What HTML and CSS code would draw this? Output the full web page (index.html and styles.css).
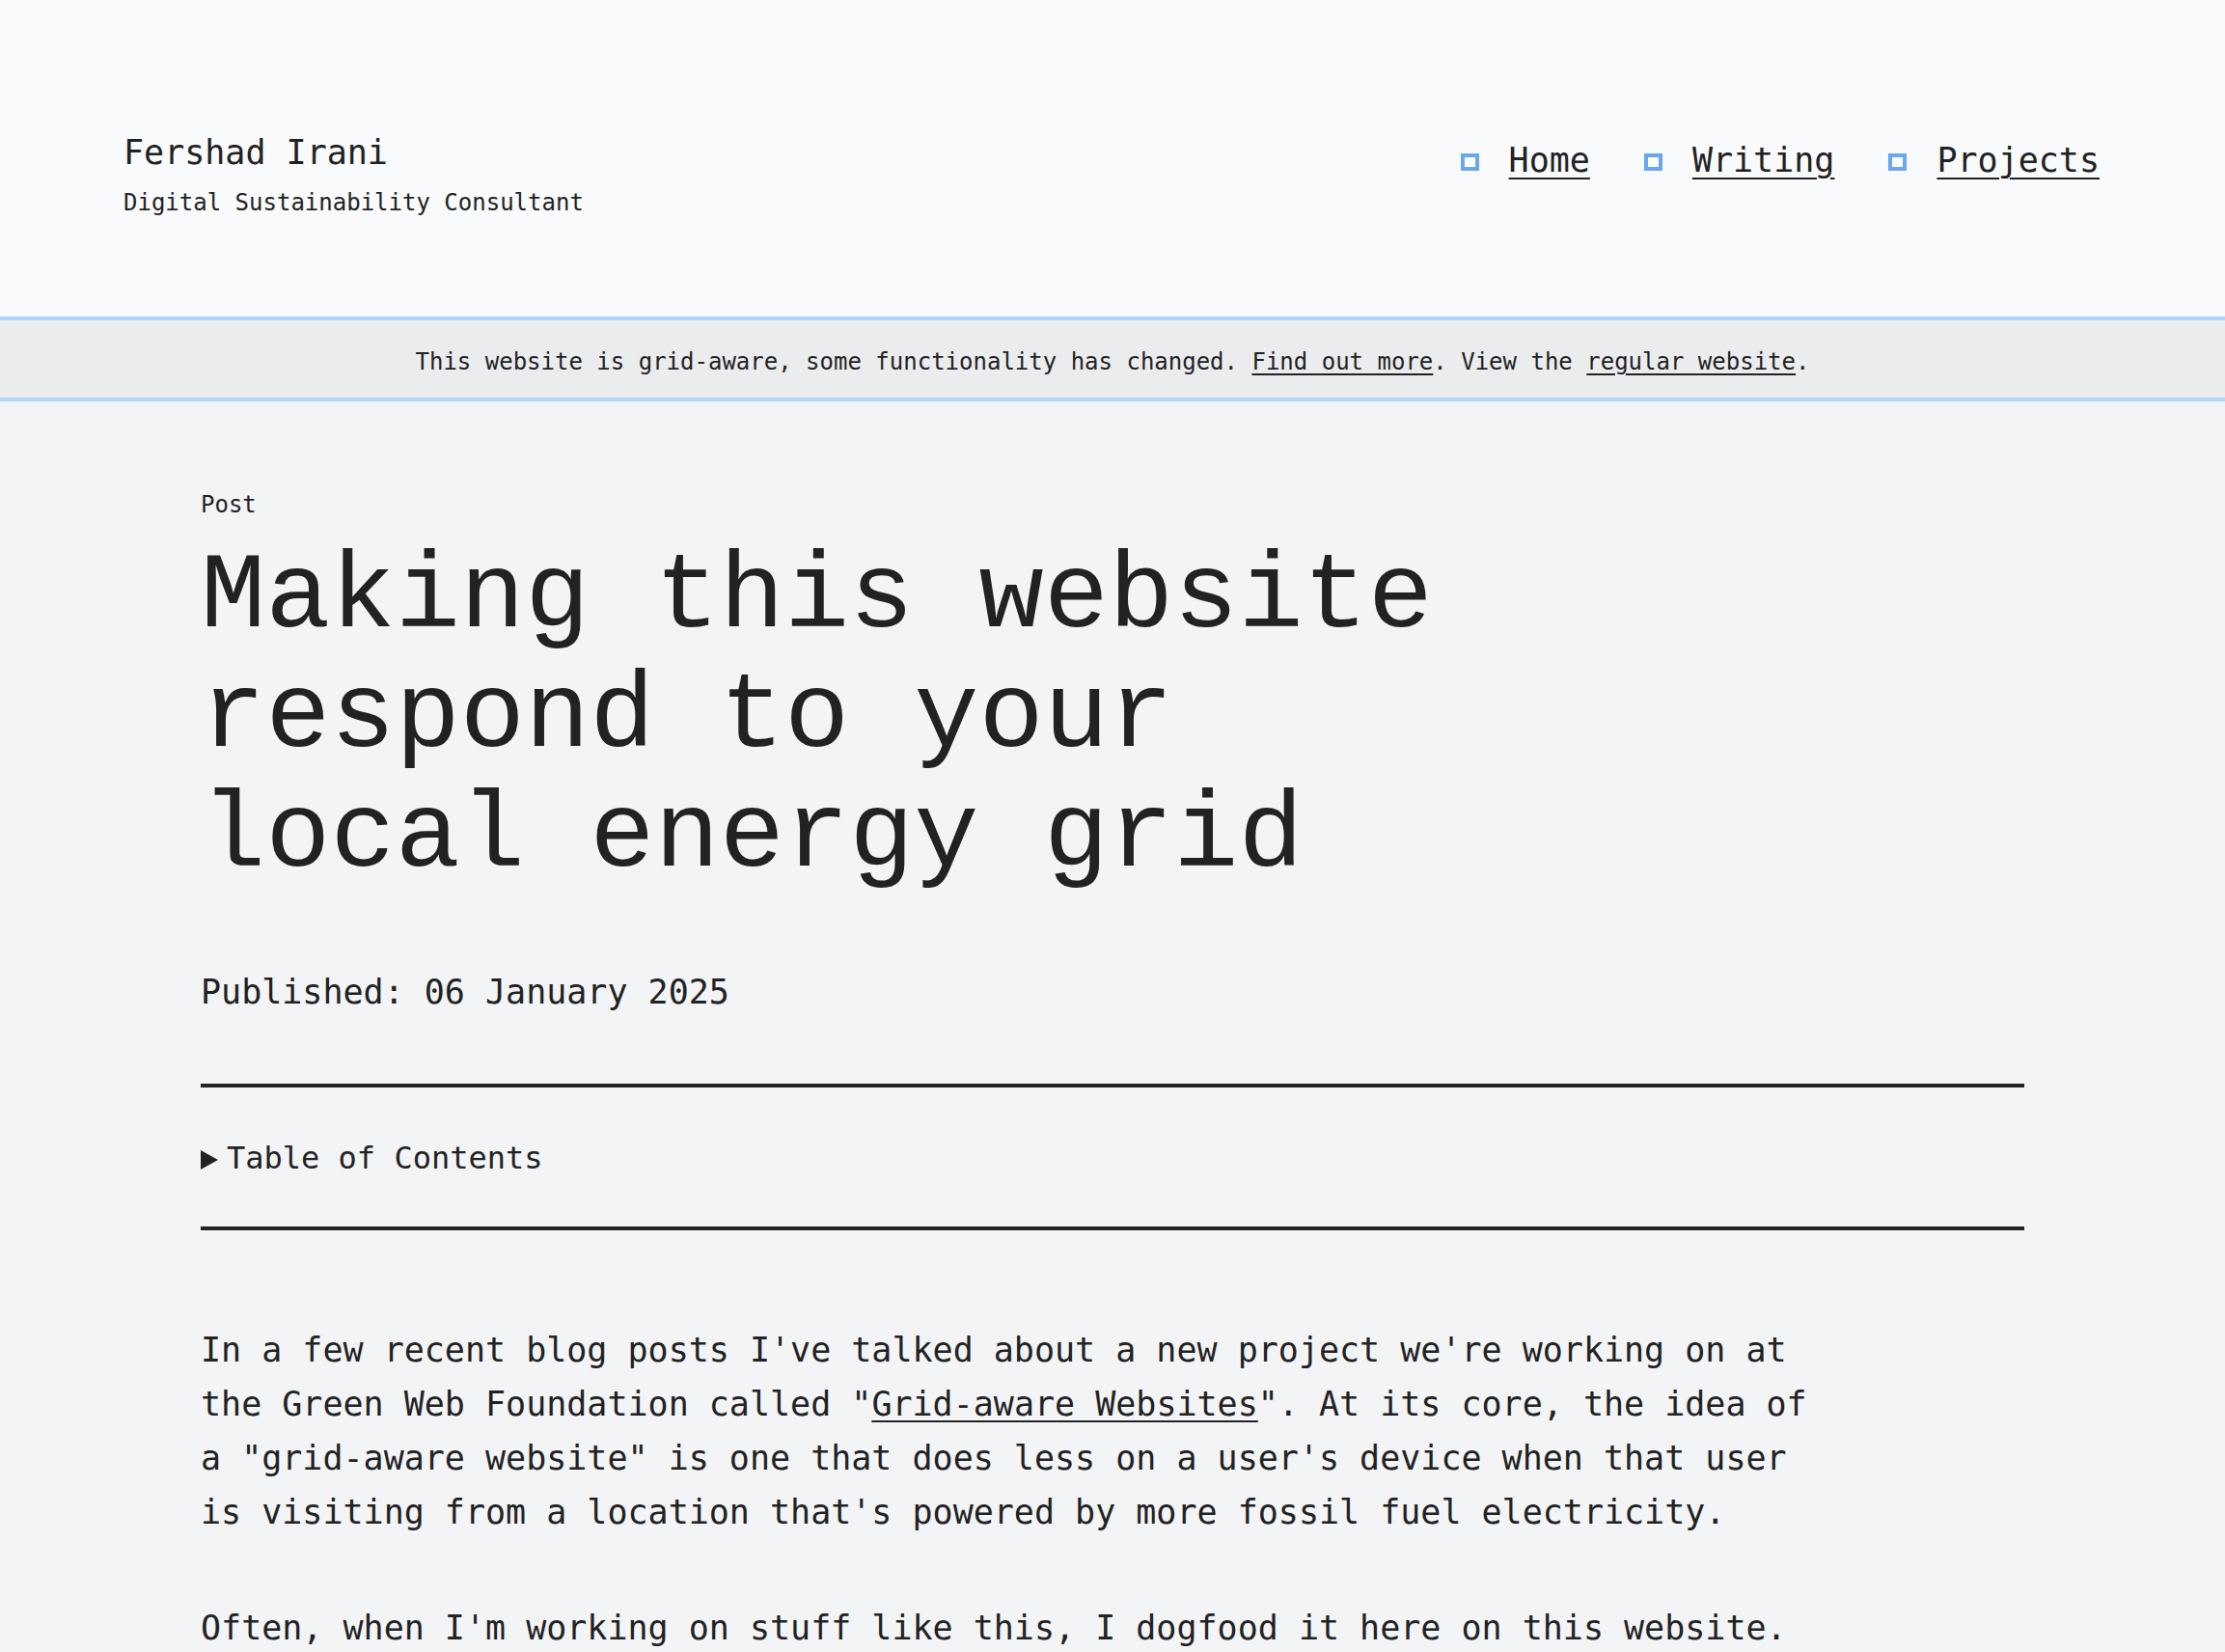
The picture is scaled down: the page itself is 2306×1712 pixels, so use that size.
FILE: index.html
```html
<!DOCTYPE html>
<html lang="en">
<head>
<meta charset="utf-8">
<title>Making this website respond to your local energy grid</title>
<link rel="stylesheet" href="styles.css">
</head>
<body>
<header class="site-header">
  <div class="brand">
    <div class="brand-name">Fershad Irani</div>
    <div class="brand-tag">Digital Sustainability Consultant</div>
  </div>
  <nav class="site-nav">
    <ul class="nav-list">
      <li class="nav-item"><a href="#">Home</a></li>
      <li class="nav-item"><a href="#">Writing</a></li>
      <li class="nav-item"><a href="#">Projects</a></li>
    </ul>
  </nav>
</header>
<div class="grid-banner">This website is grid-aware, some functionality has changed. <a href="#">Find out more</a>. View the <a href="#">regular website</a>.</div>
<main class="content">
  <div class="post-kind">Post</div>
  <h1 class="post-title">Making this website respond to your local energy grid</h1>
  <p class="post-date">Published: 06 January 2025</p>
  <details class="toc">
    <summary>Table of Contents</summary>
  </details>
  <div class="post-body">
    <p>In a few recent blog posts I've talked about a new project we're working on at the Green Web Foundation called "<a href="#">Grid-aware Websites</a>". At its core, the idea of a "grid-aware website" is one that does less on a user's device when that user is visiting from a location that's powered by more fossil fuel electricity.</p>
    <p>Often, when I'm working on stuff like this, I dogfood it here on this website. Here's how I've made this website respond to the local energy grid of its visitors.</p>
  </div>
</main>
</body>
</html>
```
FILE: styles.css
```css
*, *::before, *::after { box-sizing: border-box; }
html, body { margin: 0; padding: 0; }
body {
  background: #f3f4f6;
  color: #222222;
  font-family: "DejaVu Sans Mono", "Liberation Mono", monospace;
}
a { color: #222222; text-decoration: underline; text-decoration-thickness: 2px; text-underline-offset: 5px; }

.site-header {
  background: #f9fafb;
  display: flex;
  justify-content: space-between;
  align-items: flex-start;
  padding: 136px 130px 0 128px;
  height: 328px;
}
.brand-name { font-size: 35px; line-height: 44px; }
.brand-tag { font-size: 24px; line-height: 30px; margin-top: 15px; }

.nav-list {
  list-style: none;
  margin: 8px 0 0;
  padding: 0;
  display: flex;
  gap: 56px;
}
.nav-item {
  display: flex;
  align-items: center;
  gap: 31px;
  font-size: 35px;
  line-height: 44px;
}
.nav-item::before {
  content: "";
  flex: 0 0 19px;
  width: 19px;
  height: 18px;
  border: 4px solid #69a7f1;
  background: #ffffff;
  margin-top: 3px;
}
.nav-item a { text-underline-offset: 6px; }

.grid-banner {
  background: #ebecee;
  border-top: 4px solid #b2d6fb;
  border-bottom: 4px solid #b2d6fb;
  text-align: center;
  font-size: 24px;
  line-height: 30px;
  padding: 28px 0 22px;
}
.grid-banner a { text-underline-offset: 4px; text-decoration-thickness: 2px; }

.content {
  width: 1890px;
  margin: 0 auto;
  padding-top: 92px;
}
.post-kind { font-size: 24px; line-height: 30px; }
.post-title {
  font-family: "Courier New", "Nimbus Mono PS", "FreeMono", "Liberation Mono", monospace;
  font-weight: normal;
  font-size: 112px;
  line-height: 124px;
  max-width: 1340px;
  margin: 20px 0 0;
}
.post-date {
  font-size: 35px;
  line-height: 54px;
  margin: 71px 0 68px;
}
.toc {
  border-top: 4px solid #222222;
  border-bottom: 4px solid #222222;
  padding: 48px 0 45px;
  font-size: 32px;
  line-height: 51px;
}
.toc summary {
  cursor: pointer;
  list-style: none;
  display: flex;
  align-items: center;
  gap: 9px;
}
.toc summary::-webkit-details-marker { display: none; }
.toc summary::before {
  content: "";
  width: 18px;
  height: 20px;
  border-left: 18px solid #222222;
  border-top: 10px solid transparent;
  border-bottom: 10px solid transparent;
  margin-top: 3px;
}

.post-body { padding-top: 96px; }
.post-body p {
  font-size: 35px;
  line-height: 56px;
  max-width: 80ch;
  margin: 0 0 64px;
}
```
